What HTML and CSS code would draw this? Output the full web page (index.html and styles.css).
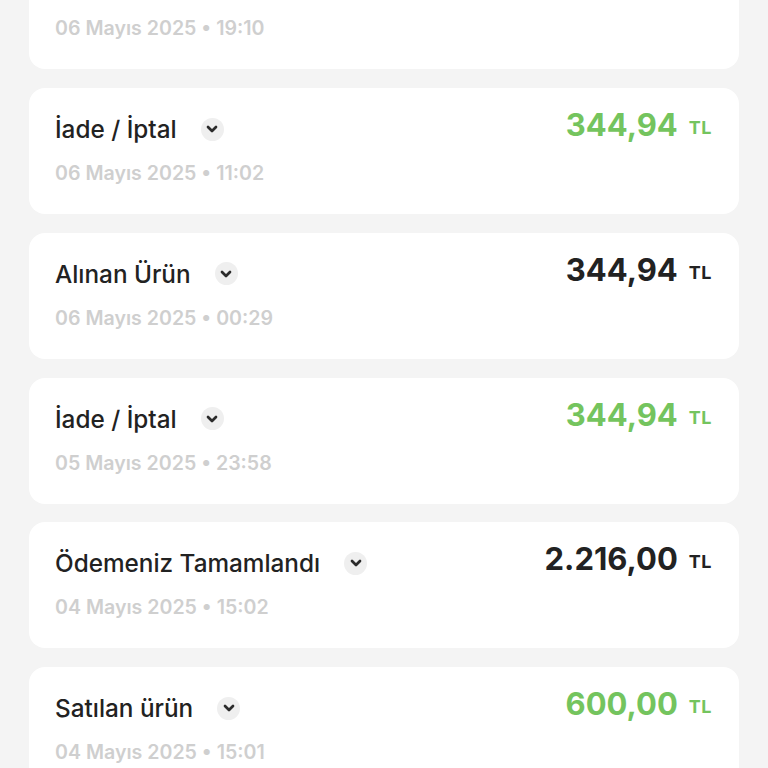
FILE: index.html
```html
<!DOCTYPE html>
<html lang="tr">
<head>
<meta charset="utf-8">
<link rel="stylesheet" href="styles.css">
</head>
<body>
<div class="list">
  <div class="card">
    <div class="info">
      <div class="title-row"><span class="title">Alınan Ürün</span><span class="chev"><svg width="12" height="8" viewBox="0 0 12 8"><path d="M2 2 L6 6 L10 2" fill="none" stroke="#2b2b2b" stroke-width="2.7" stroke-linecap="round" stroke-linejoin="round"/></svg></span></div>
      <div class="date">06 Mayıs 2025 • 19:10</div>
    </div>
    <div class="amount"><span class="num">344,94</span><span class="cur">TL</span></div>
  </div>
  <div class="card">
    <div class="info">
      <div class="title-row"><span class="title">İade / İptal</span><span class="chev"><svg width="12" height="8" viewBox="0 0 12 8"><path d="M2 2 L6 6 L10 2" fill="none" stroke="#2b2b2b" stroke-width="2.7" stroke-linecap="round" stroke-linejoin="round"/></svg></span></div>
      <div class="date">06 Mayıs 2025 • 11:02</div>
    </div>
    <div class="amount green"><span class="num">344,94</span><span class="cur">TL</span></div>
  </div>
  <div class="card">
    <div class="info">
      <div class="title-row"><span class="title">Alınan Ürün</span><span class="chev"><svg width="12" height="8" viewBox="0 0 12 8"><path d="M2 2 L6 6 L10 2" fill="none" stroke="#2b2b2b" stroke-width="2.7" stroke-linecap="round" stroke-linejoin="round"/></svg></span></div>
      <div class="date">06 Mayıs 2025 • 00:29</div>
    </div>
    <div class="amount"><span class="num">344,94</span><span class="cur">TL</span></div>
  </div>
  <div class="card">
    <div class="info">
      <div class="title-row"><span class="title">İade / İptal</span><span class="chev"><svg width="12" height="8" viewBox="0 0 12 8"><path d="M2 2 L6 6 L10 2" fill="none" stroke="#2b2b2b" stroke-width="2.7" stroke-linecap="round" stroke-linejoin="round"/></svg></span></div>
      <div class="date">05 Mayıs 2025 • 23:58</div>
    </div>
    <div class="amount green"><span class="num">344,94</span><span class="cur">TL</span></div>
  </div>
  <div class="card">
    <div class="info">
      <div class="title-row"><span class="title">Ödemeniz Tamamlandı</span><span class="chev"><svg width="12" height="8" viewBox="0 0 12 8"><path d="M2 2 L6 6 L10 2" fill="none" stroke="#2b2b2b" stroke-width="2.7" stroke-linecap="round" stroke-linejoin="round"/></svg></span></div>
      <div class="date">04 Mayıs 2025 • 15:02</div>
    </div>
    <div class="amount"><span class="num">2.216,00</span><span class="cur">TL</span></div>
  </div>
  <div class="card">
    <div class="info">
      <div class="title-row"><span class="title">Satılan ürün</span><span class="chev"><svg width="12" height="8" viewBox="0 0 12 8"><path d="M2 2 L6 6 L10 2" fill="none" stroke="#2b2b2b" stroke-width="2.7" stroke-linecap="round" stroke-linejoin="round"/></svg></span></div>
      <div class="date">04 Mayıs 2025 • 15:01</div>
    </div>
    <div class="amount green"><span class="num">600,00</span><span class="cur">TL</span></div>
  </div>
</div>
</body>
</html>
```
FILE: styles.css
```css
html, body {
  margin: 0;
  padding: 0;
  background: #f4f4f4;
  font-family: Inter, "Noto Sans", "Liberation Sans", sans-serif;
  overflow: hidden;
}
.list {
  display: flex;
  flex-direction: column;
  gap: 18.75px;
  padding: 0 29px;
  margin-top: -56.75px;
}
.card {
  background: #ffffff;
  border-radius: 16px;
  height: 126px;
  box-sizing: border-box;
  padding: 21px 27px 0 26px;
  display: flex;
  justify-content: space-between;
  align-items: flex-start;
}
.info {
  display: flex;
  flex-direction: column;
  margin-top: 5px;
}
.title-row {
  display: flex;
  align-items: center;
  gap: 24px;
  height: 30px;
}
.title {
  font-size: 24.3px;
  font-weight: 500;
  color: #222222;
}
.chev {
  width: 23px;
  height: 23px;
  border-radius: 50%;
  background: #efefef;
  display: flex;
  align-items: center;
  justify-content: center;
}
.date {
  margin-top: 17px;
  font-size: 19.6px;
  font-weight: 600;
  color: #cfcfcf;
}
.amount {
  white-space: nowrap;
  color: #222222;
  line-height: 1;
}
.amount .num {
  font-size: 31px;
  font-weight: 700;
}
.amount .cur {
  font-size: 18px;
  font-weight: 700;
  margin-left: 11px;
  vertical-align: 2px;
  letter-spacing: 0.5px;
}
.amount.green {
  color: #74c45e;
}
```
